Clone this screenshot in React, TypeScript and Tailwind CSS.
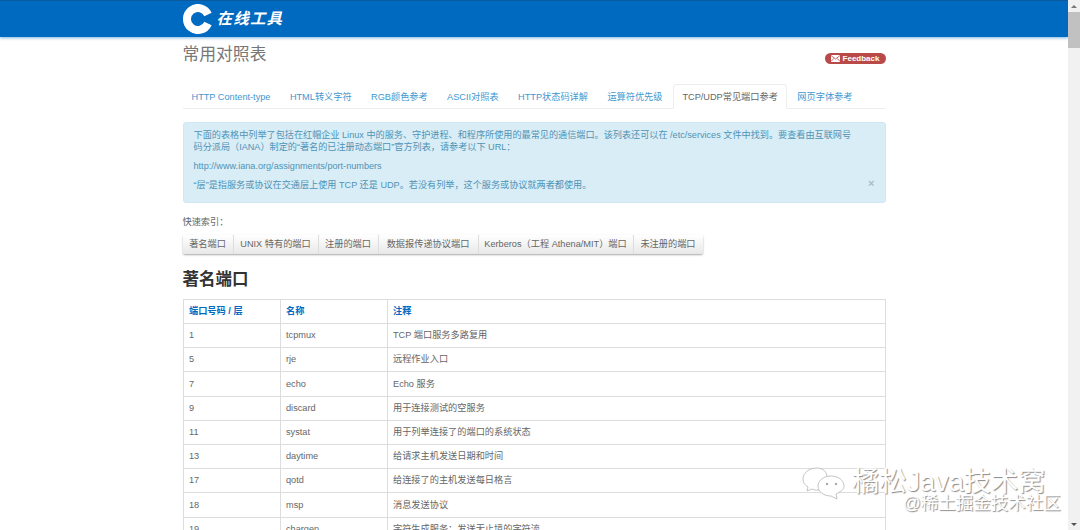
const tabs = [
  "HTTP Content-type",
  "HTML转义字符",
  "RGB颜色参考",
  "ASCII对照表",
  "HTTP状态码详解",
  "运算符优先级",
  "TCP/UDP常见端口参考",
  "网页字体参考",
];

const quickLinks = [
  { name: "著名端口", width: "w-[51px]" },
  { name: "UNIX 特有的端口", width: "w-[85px]" },
  { name: "注册的端口", width: "w-[60px]" },
  { name: "数据报传递协议端口", width: "w-[100px]" },
  { name: "Kerberos（工程 Athena/MIT）端口", width: "w-[155px]" },
  { name: "未注册的端口", width: "w-[69px]" },
];

const rows = [
  ["1", "tcpmux", "TCP 端口服务多路复用"],
  ["5", "rje", "远程作业入口"],
  ["7", "echo", "Echo 服务"],
  ["9", "discard", "用于连接测试的空服务"],
  ["11", "systat", "用于列举连接了的端口的系统状态"],
  ["13", "daytime", "给请求主机发送日期和时间"],
  ["17", "qotd", "给连接了的主机发送每日格言"],
  ["18", "msp", "消息发送协议"],
  ["19", "chargen", "字符生成服务；发送无止境的字符流"],
];

function Logo() {
  return (
    <div className="flex items-center gap-[4px]">
      <svg width="30" height="30" viewBox="0 0 30 30">
        <path
          d="M25 10.5 A11 11 0 1 0 25 19.5"
          fill="none"
          stroke="#fff"
          strokeWidth="8"
        />
      </svg>
      <span className="text-[15.5px] font-bold italic leading-none tracking-[1.2px] text-white">
        在线工具
      </span>
    </div>
  );
}

function Watermark() {
  return (
    <div className="pointer-events-none absolute left-[802px] top-[465px] h-[60px] w-[264px]">
      <svg className="absolute left-0 top-0" width="46" height="36" viewBox="0 0 46 36" fill="#fff" stroke="#b5b5b5" strokeWidth="0.8">
        <path d="M15 3 C7 3 1 8 1 14 C1 18 3 20 6 22 L5 26 L10 24 C12 25 14 25 16 25 C27 25 30 3 15 3 Z" />
        <path d="M29 11 C21 11 16 16 16 21 C16 27 22 31 29 31 L35 34 L34 29 C38 27 42 25 42 21 C42 15 36 11 29 11 Z" />
        <circle cx="25" cy="19" r="1.2" fill="#aaa" stroke="none" />
        <circle cx="34" cy="19" r="1.2" fill="#aaa" stroke="none" />
      </svg>
      <div className="absolute left-[50px] top-[4px] whitespace-nowrap text-[27.2px] leading-[26px] text-white [text-shadow:1px_1px_1px_#8a8a8a]">
        橘松Java技术窝
      </div>
      <div className="absolute left-[101px] top-[30px] whitespace-nowrap text-[17.5px] leading-[17px] text-white [text-shadow:1px_1px_1px_#8a8a8a]">
        @稀土掘金技术社区
      </div>
    </div>
  );
}

export default function App() {
  return (
    <div className="relative flex h-[530px] w-[1080px] overflow-hidden bg-white font-['Liberation_Sans','Noto_Sans_CJK_SC',sans-serif] text-[9.2px] text-[#666]">
      <div className="flex-1 overflow-hidden">
        {/* Top bar */}
        <header className="h-[37px] border-t border-[#0b5a9e] bg-[#0069c0] shadow-[0_1px_3px_rgba(0,105,192,0.5)]">
          <div className="mx-auto flex h-full w-[703px] items-center">
            <Logo />
          </div>
        </header>

        <main className="mx-auto w-[703px]">
          <div className="flex h-[47px] items-start justify-between">
            <h1 className="mt-[7px] text-[16.8px] font-normal leading-[22px] text-[#777]">常用对照表</h1>
            <a className="mt-[16px] flex h-[11px] w-[61px] items-center justify-center gap-[3px] rounded-full bg-[#b94a48] text-[8px] font-bold text-white">
              <svg width="9" height="7" viewBox="0 0 9 7">
                <rect width="9" height="7" fill="#fff" />
                <path d="M0 0.5 L4.5 4 L9 0.5 M0 6.5 L3 3.2 M9 6.5 L6 3.2" fill="none" stroke="#b94a48" strokeWidth="0.8" />
              </svg>
              Feedback
            </a>
          </div>

          {/* Tabs */}
          <nav className="flex h-[25px] border-b border-[#eee]">
            {tabs.map((tab) => (
              <a
                key={tab}
                className={
                  tab.startsWith("TCP")
                    ? "mr-[1px] flex h-[25px] items-center rounded-t-[3px] border border-[#eee] border-b-white bg-white px-[8.5px] pt-[3px] text-[#666]"
                    : "mr-[1.4px] flex h-[24px] items-center px-[9px] pt-[3px] text-[#3f97d0]"
                }
              >
                {tab}
              </a>
            ))}
          </nav>

          {/* Alert */}
          <div className="relative mt-[13px] h-[81px] rounded-[3px] border border-[#cfe8f3] bg-[#d9edf7] px-[10px] pt-[6px] text-[9.15px] text-[#4f93b5]">
            <p className="w-[665px] leading-[12px]">
              下面的表格中列举了包括在红帽企业 Linux 中的服务、守护进程、和程序所使用的最常见的通信端口。该列表还可以在 /etc/services 文件中找到。要查看由互联网号码分派局（IANA）制定的“著名的已注册动态端口”官方列表，请参考以下 URL：
            </p>
            <p className="mt-[7px] leading-[12px]">http://www.iana.org/assignments/port-numbers</p>
            <p className="mt-[7px] leading-[12px]">“层”是指服务或协议在交通层上使用 TCP 还是 UDP。若没有列举，这个服务或协议就两者都使用。</p>
            <span className="absolute right-[10px] top-[54px] text-[11px] font-bold leading-[12px] text-[#a9bcc6]">×</span>
          </div>

          {/* Quick index */}
          <p className="mt-[13px] leading-[12px]">快速索引：</p>
          <div className="mt-[7px] flex h-[19px] w-[520px] rounded-[2px] bg-gradient-to-b from-white to-[#e8e8e8] shadow-[0_1px_2px_rgba(0,0,0,0.35)]">
            {quickLinks.map((link, i) => (
              <a
                key={link.name}
                className={
                  link.width +
                  (i === quickLinks.length - 1
                    ? " flex flex-none items-center justify-center whitespace-nowrap"
                    : " flex flex-none items-center justify-center whitespace-nowrap border-r border-[#ddd]")
                }
              >
                {link.name}
              </a>
            ))}
          </div>

          <h2 className="mt-[15px] text-[16.5px] font-bold leading-[20px] text-[#333]">著名端口</h2>

          <table className="mt-[10px] w-[703px] table-fixed border-collapse">
            <colgroup>
              <col className="w-[97px]" />
              <col className="w-[107px]" />
              <col />
            </colgroup>
            <thead>
              <tr className="h-[24px] text-left text-[#0069c0]">
                <th className="border border-[#ddd] px-[5.5px] pt-[1px] font-bold">端口号码 / 层</th>
                <th className="border border-[#ddd] px-[5.5px] pt-[1px] font-bold">名称</th>
                <th className="border border-[#ddd] px-[5.5px] pt-[1px] font-bold">注释</th>
              </tr>
            </thead>
            <tbody>
              {rows.map((row) => (
                <tr key={row[0]} className="h-[24.2px]">
                  {row.map((cell) => (
                    <td key={cell} className="border border-[#ddd] px-[5.5px] pt-[1px]">
                      {cell}
                    </td>
                  ))}
                </tr>
              ))}
            </tbody>
          </table>
        </main>
      </div>

      {/* Scrollbar */}
      <div className="flex w-[12px] flex-col bg-[#f1f1f1]">
        <div className="flex h-[12px] items-center justify-center">
          <div className="h-0 w-0 border-x-[3px] border-b-[3px] border-x-transparent border-b-[#777]" />
        </div>
        <div className="h-[36px] bg-[#c1c1c1]" />
        <div className="flex-1" />
        <div className="flex h-[12px] items-center justify-center">
          <div className="h-0 w-0 border-x-[3px] border-t-[3px] border-x-transparent border-t-[#555]" />
        </div>
      </div>

      <Watermark />
    </div>
  );
}
